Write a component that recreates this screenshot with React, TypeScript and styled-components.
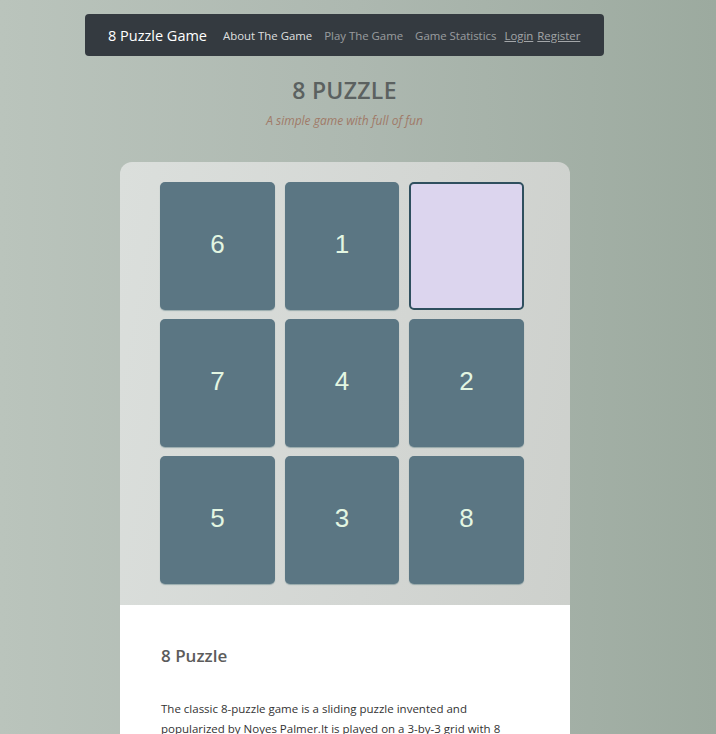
import React from "react";
import styled, { createGlobalStyle } from "styled-components";

const Global = createGlobalStyle`
  html, body { margin: 0; padding: 0; }
  body {
    min-height: 734px;
    background: linear-gradient(90deg, #bac4bc 0%, #adb8b0 50%, #9caa9f 100%);
    font-family: "Open Sans", "Noto Sans", sans-serif;
  }
`;

const Page = styled.div`
  width: 689px;
  display: flex;
  flex-direction: column;
  align-items: center;
  padding-top: 14px;
`;

const Nav = styled.nav`
  width: 519px;
  height: 42px;
  box-sizing: border-box;
  background: #343a40;
  border-radius: 4px;
  display: flex;
  align-items: center;
  padding-left: 23px;
  white-space: nowrap;
`;

const Brand = styled.span`
  color: #fff;
  font-size: 14.5px;
  margin-right: 16px;
`;

const NavLink = styled.span<{ $active?: boolean; $gap?: number }>`
  color: ${(p) => (p.$active ? "rgba(255,255,255,0.85)" : "rgba(255,255,255,0.5)")};
  font-size: 11.4px;
  margin-right: ${(p) => p.$gap ?? 12}px;
`;

const AuthLink = styled.a`
  color: rgba(255, 255, 255, 0.55);
  font-size: 11.4px;
  text-decoration: underline;
  margin-right: 4px;
`;

const Title = styled.h1`
  margin: 18px 0 0;
  font-size: 23px;
  font-weight: 600;
  color: #5b6160;
  letter-spacing: 0.3px;
`;

const Subtitle = styled.p`
  margin: 6px 0 0;
  font-size: 12px;
  font-style: italic;
  color: #a07a68;
`;

const Card = styled.div`
  margin-top: 33px;
  width: 450px;
  border-radius: 12px 12px 0 0;
  overflow: hidden;
  margin-left: 1px;
`;

const Board = styled.div`
  background: linear-gradient(100deg, #dbdfdc 0%, #d3d6d3 60%, #cdd0cc 100%);
  padding: 20px 46px 21px 40px;
  display: grid;
  grid-template-columns: 115px 114px 115px;
  grid-auto-rows: 128px;
  column-gap: 10px;
  row-gap: 9px;
`;

const Tile = styled.div<{ $empty?: boolean }>`
  border-radius: 5px;
  box-sizing: border-box;
  display: flex;
  align-items: center;
  justify-content: center;
  padding-bottom: 3px;
  background: ${(p) => (p.$empty ? "#dcd5ee" : "#5b7683")};
  border: ${(p) => (p.$empty ? "2px solid #2f4f5e" : "none")};
  box-shadow: ${(p) => (p.$empty ? "none" : "0 1px 1px rgba(60,100,110,0.4)")};
  color: #e3f6e2;
  font-family: "Liberation Sans", Arial, sans-serif;
  font-size: 26px;
`;

const Info = styled.div`
  background: #fff;
  padding: 39px 41px 0;
  min-height: 140px;
`;

const InfoTitle = styled.h2`
  margin: 0;
  font-size: 17px;
  font-weight: 600;
  color: #5c5c5c;
`;

const InfoText = styled.p`
  margin: 32px 0 0;
  font-size: 11.5px;
  line-height: 20px;
  color: #333;
`;

const tiles = [6, 1, 0, 7, 4, 2, 5, 3, 8];

export default function App() {
  return (
    <>
      <Global />
      <Page>
        <Nav>
          <Brand>8 Puzzle Game</Brand>
          <NavLink $active>About The Game</NavLink>
          <NavLink>Play The Game</NavLink>
          <NavLink $gap={8}>Game Statistics</NavLink>
          <AuthLink>Login</AuthLink>
          <AuthLink>Register</AuthLink>
        </Nav>
        <Title>8 PUZZLE</Title>
        <Subtitle>A simple game with full of fun</Subtitle>
        <Card>
          <Board>
            {tiles.map((t, i) => (
              <Tile key={i} $empty={t === 0}>
                {t === 0 ? "" : t}
              </Tile>
            ))}
          </Board>
          <Info>
            <InfoTitle>8 Puzzle</InfoTitle>
            <InfoText>
              The classic 8-puzzle game is a sliding puzzle invented and
              popularized by Noyes Palmer.It is played on a 3-by-3 grid with 8
              square blocks labeled 1 through 8 and a blank square.
            </InfoText>
          </Info>
        </Card>
      </Page>
    </>
  );
}
